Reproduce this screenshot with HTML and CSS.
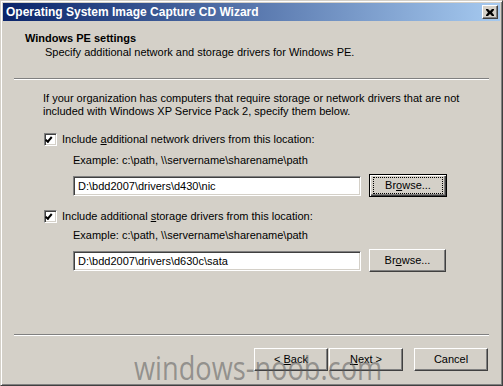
FILE: index.html
```html
<!DOCTYPE html>
<html lang="en">
<head>
    <meta charset="UTF-8">
    <title>Operating System Image Capture CD Wizard</title>
    <link rel="stylesheet" href="styles.css">
</head>
<body>
    <div class="window">
        <div class="titlebar">
            <span class="title">Operating System Image Capture CD Wizard</span>
            <span class="close-btn">
                <svg width="8" height="7" viewBox="0 0 8 7">
                    <path d="M0 0h2l2 2 2-2h2v1L6 3.5 8 6v1H6L4 5 2 7H0V6l2-2.5L0 1z" fill="#000"/>
                </svg>
            </span>
        </div>

        <div class="header">
            <div class="header-title">Windows PE settings</div>
            <div class="header-sub">Specify additional network and storage drivers for Windows PE.</div>
        </div>
        <div class="etched"></div>

        <div class="content">
            <p class="intro">If your organization has computers that require storage or network drivers that are not included with Windows XP Service Pack 2, specify them below.</p>

            <!-- network drivers -->
            <div class="check-row first">
                <span class="checkbox"></span>
                <span>Include <u>a</u>dditional network drivers from this location:</span>
            </div>
            <div class="example">Example: c:\path, \\servername\sharename\path</div>
            <div class="path-row">
                <div class="textbox">D:\bdd2007\drivers\d430\nic</div>
                <div class="button focused"><span class="focus-rect">Br<u>o</u>wse...</span></div>
            </div>

            <!-- storage drivers -->
            <div class="check-row second">
                <span class="checkbox"></span>
                <span>Include additional <u>s</u>torage drivers from this location:</span>
            </div>
            <div class="example tight">Example: c:\path, \\servername\sharename\path</div>
            <div class="path-row">
                <div class="textbox">D:\bdd2007\drivers\d630c\sata</div>
                <div class="button"><span>Br<u>o</u>wse...</span></div>
            </div>
        </div>

        <div class="etched bottom"></div>
        <div class="footer">
            <div class="button nav"><span>&lt; <u>B</u>ack</span></div>
            <div class="button nav"><span><u>N</u>ext &gt;</span></div>
            <div class="button nav cancel"><span>Cancel</span></div>
        </div>

        <div class="watermark">windows-noob.com</div>
    </div>
</body>
</html>
```

FILE: styles.css
```css
body {
    margin: 0;
    font-family: "Liberation Sans", Arial, sans-serif;
    font-size: 11px;
    line-height: 13px;
    color: #000;
}
.window {
    position: relative;
    width: 503px;
    height: 386px;
    box-sizing: border-box;
    padding: 2px;
    background: #d4d0c8;
    border: 1px solid;
    border-color: #d4d0c8 #404040 #404040 #d4d0c8;
    box-shadow: inset 1px 1px #fff, inset -1px -1px #808080;
    overflow: hidden;
}

/* Title bar */
.titlebar {
    height: 18px;
    display: flex;
    align-items: center;
    justify-content: space-between;
    padding: 0 2px 0 3px;
    background: linear-gradient(to right, #0a246a, #a6caf0);
}
.title {
    color: #fff;
    font-weight: bold;
    font-size: 12px;
}
.close-btn {
    width: 14px;
    height: 12px;
    display: flex;
    align-items: center;
    justify-content: center;
    background: #d4d0c8;
    border: 1px solid;
    border-color: #fff #404040 #404040 #fff;
    box-shadow: inset -1px -1px #808080;
}

/* Header */
.header {
    padding: 11px 0 0 22px;
}
.header-title {
    font-weight: bold;
}
.header-sub {
    margin-top: 1px;
    padding-left: 20px;
}
.etched {
    height: 1px;
    margin: 19px 11px 0 11px;
    background: #808080;
    border-bottom: 1px solid #fff;
}
.etched.bottom {
    margin-top: 0;
}

/* Main content */
.content {
    height: 242px;
    padding: 12px 0 0 40px;
}
.intro {
    margin: 0;
    width: 430px;
}
.check-row {
    display: flex;
    align-items: center;
    gap: 5px;
    padding-left: 1px;
}
.check-row.first {
    margin-top: 15px;
}
.check-row.second {
    margin-top: 13px;
}
.checkbox {
    position: relative;
    width: 9px;
    height: 9px;
    flex-shrink: 0;
    background: #fff;
    border: 1px solid;
    border-color: #808080 #fff #fff #808080;
    box-shadow: inset 1px 1px #404040, inset -1px -1px #d4d0c8;
    padding: 1px;
}
.checkbox::after {
    content: "";
    position: absolute;
    top: 5px;
    left: 3px;
    width: 5px;
    height: 2px;
    border-left: 2px solid #000;
    border-bottom: 2px solid #000;
    transform: rotate(-50deg);
    transform-origin: left bottom;
}
.example {
    margin-top: 8px;
    padding-left: 30px;
}
.example.tight {
    margin-top: 6px;
}
.path-row {
    display: flex;
    align-items: center;
    gap: 8px;
    margin-top: 7px;
    padding-left: 30px;
}
.textbox {
    width: 278px;
    height: 18px;
    padding: 0 4px;
    line-height: 18px;
    background: #fff;
    border: 1px solid;
    border-color: #808080 #fff #fff #808080;
    box-shadow: inset 1px 1px #404040, inset -1px -1px #d4d0c8;
}
.button {
    width: 75px;
    height: 21px;
    box-sizing: content-box;
    display: flex;
    align-items: center;
    justify-content: center;
    border: 1px solid;
    border-color: #fff #404040 #404040 #fff;
    box-shadow: inset -1px -1px #808080;
}
.button.focused {
    width: 76px;
    border-color: #000;
    box-shadow: inset 1px 1px #fff, inset -1px -1px #404040, inset -2px -2px #808080;
}
.focus-rect {
    width: 68px;
    height: 15px;
    line-height: 15px;
    text-align: center;
    outline: 1px dotted #000;
}

/* Footer */
.footer {
    display: flex;
    gap: 1px;
    padding: 12px 0 0 251px;
}
.button.nav {
    width: 72px;
}
.button.cancel {
    margin-left: 10px;
}

.watermark {
    position: absolute;
    left: 133px;
    top: 347px;
    font-family: "Open Sans", sans-serif;
    font-size: 32px;
    line-height: 40px;
    transform: scaleX(0.85);
    transform-origin: left center;
    color: rgba(90, 90, 90, 0.55);
}
```
